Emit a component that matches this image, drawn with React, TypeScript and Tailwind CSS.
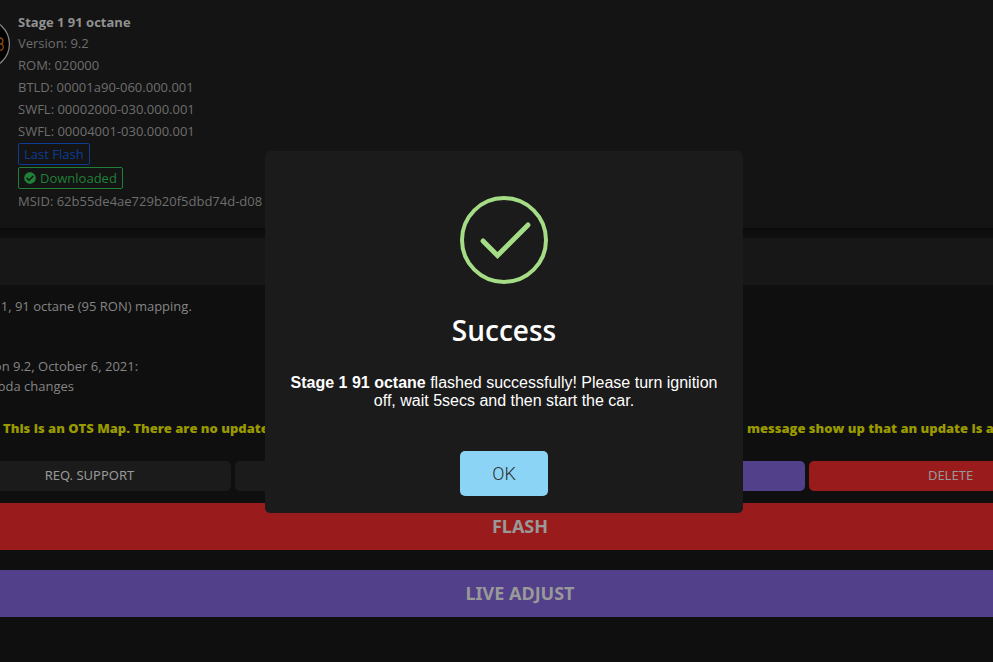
import React from 'react';
import { FaCheckCircle } from 'react-icons/fa';

interface MapInfo {
  name: string;
  details: string[];
  msid: string;
}

const map: MapInfo = {
  name: 'Stage 1 91 octane',
  details: [
    'Version: 9.2',
    'ROM: 020000',
    'BTLD: 00001a90-060.000.001',
    'SWFL: 00002000-030.000.001',
    'SWFL: 00004001-030.000.001',
  ],
  msid: '62b55de4ae729b20f5dbd74d-d08',
};

const MapLogo: React.FC = () => (
  <svg viewBox="0 0 50 50" className="size-[50px] shrink-0" aria-hidden="true">
    <circle cx="25" cy="25" r="24.4" fill="#000000" stroke="#8a8a8a" strokeWidth="1.2" />
    <path
      d="M37 19h3a2.800 2.800 0 0 1 0 5.800H38M40 24.800a3.300 3.300 0 0 1 0 6.600H37"
      fill="none"
      stroke="#8a4a0c"
      strokeWidth="1.3"
    />
  </svg>
);

const MapHeader: React.FC<MapInfo> = ({ name, details, msid }) => (
  <header className="flex gap-2 bg-[#141414] pl-3 pt-3 pb-4 shadow-[0_1px_3px_#080808]">
    <div className="pt-[7px]">
      <MapLogo />
    </div>
    <div className="text-[13px] leading-[22px] text-[#6e6e6e]">
      <h1 className="font-bold leading-5 text-[#919191]">{name}</h1>
      {details.map((detail, index) => (
        <p key={index}>{detail}</p>
      ))}
      <div className="flex flex-col items-start gap-0.5 py-px leading-5">
        <span className="rounded-xs border border-[#0c3c94] px-[5px] text-[#0c3c94]">Last Flash</span>
        <span className="flex items-center gap-1 rounded-xs border border-[#1f8038] px-[5px] text-[#1f8038]">
          <FaCheckCircle className="size-3" />
          Downloaded
        </span>
      </div>
      <p>MSID: {msid}</p>
    </div>
  </header>
);

const SuccessDialog: React.FC<{ name: string }> = ({ name }) => (
  <div className="fixed inset-0 flex items-center justify-center pt-0.5 pl-[15px]">
    <div
      role="dialog"
      aria-labelledby="dialog-title"
      className="flex w-[478px] flex-col items-center rounded-[5px] bg-[#1b1b1b] px-5 pt-[45px] pb-[17px] text-center text-white"
    >
      <svg viewBox="0 0 88 88" fill="none" stroke="#a5dc86" strokeWidth="4" className="size-[88px]" aria-hidden="true">
        <circle cx="44" cy="44" r="42" />
        <path d="M23 45l14.500 14.500L68 29" strokeWidth="5" strokeLinecap="round" />
      </svg>
      <h2 id="dialog-title" className="mt-[26px] text-[28px] font-semibold leading-10">
        Success
      </h2>
      <p className="mt-6 font-['Liberation_Sans',sans-serif] text-base leading-[18px]">
        <b>{name}</b> flashed successfully! Please turn ignition off, wait 5secs and then start the car.
      </p>
      <button
        type="button"
        className="mt-[41px] h-[45px] rounded-[5px] bg-[#8cd4f5] px-8 font-[Roboto,sans-serif] text-lg font-light text-[#2b2b2b]"
      >
        OK
      </button>
    </div>
  </div>
);

const App: React.FC = () => {
  return (
    <div className="min-h-screen overflow-hidden bg-[#0f0f0f] font-['Open_Sans',sans-serif]">
      <div className="-ml-[52px] -mr-[99px]">
        <MapHeader {...map} />
        <div className="mt-2.5 h-[47px] bg-[#171717]" />

        <main>
          <div className="pt-[11px] pl-4 text-[13px] leading-5 text-[#858585]">
            <p>Stage 1, 91 octane (95 RON) mapping.</p>
            <p className="mt-10">Version 9.2, October 6, 2021:</p>
            <p>- Lambda changes</p>
          </div>
          <div className="mt-[22px] flex justify-between whitespace-nowrap pl-[55px] text-[13px] font-extrabold leading-5 text-[#999900]">
            <p>This is an OTS Map. There are no updates</p>
            <p className="w-[345px]">message show up that an update is available</p>
          </div>

          <div className="mt-[23px] grid grid-cols-4 gap-1 font-['Noto_Sans',sans-serif] text-[13px] text-[#999999]">
            <button type="button" className="h-[30px] rounded-[5px] bg-[#1b1b1b]">
              REQ. SUPPORT
            </button>
            <button type="button" aria-label="Details" className="rounded-[5px] bg-[#1b1b1b]" />
            <button type="button" aria-label="Update" className="rounded-[5px] bg-[#52408a]" />
            <button type="button" className="rounded-[5px] bg-[#991b1b]">
              DELETE
            </button>
          </div>
          <div className="mt-3 flex flex-col gap-5 font-['Noto_Sans',sans-serif] text-lg leading-6 font-bold text-[#999999]">
            <button type="button" className="h-[47px] bg-[#991b1b] pb-0.5">
              FLASH
            </button>
            <button type="button" className="h-[47px] bg-[#52408a] pb-0.5">
              LIVE ADJUST
            </button>
          </div>
        </main>
      </div>

      <SuccessDialog name={map.name} />
    </div>
  );
};

export default App;
